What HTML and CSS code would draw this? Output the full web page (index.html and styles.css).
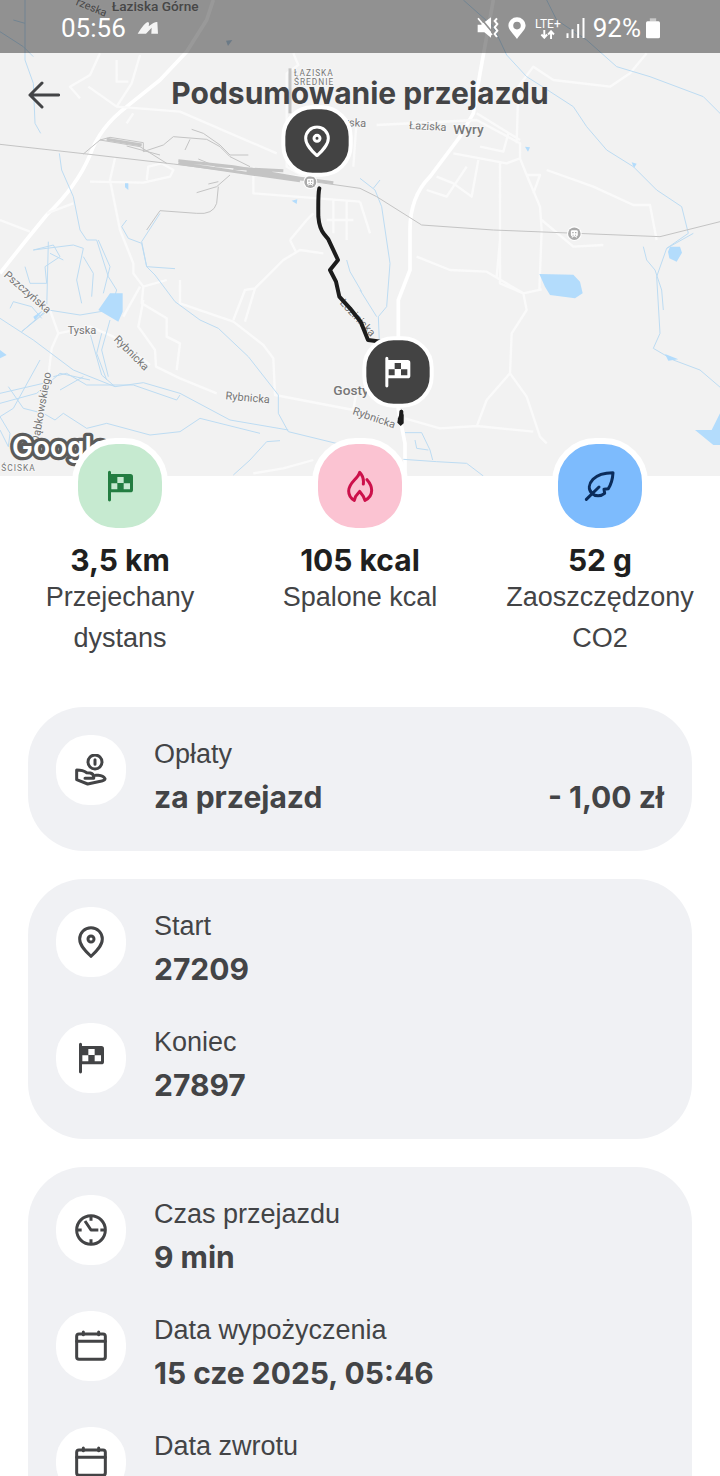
FILE: index.html
```
<!DOCTYPE html>
<html lang="pl">
<head>
<meta charset="utf-8">
<meta name="viewport" content="width=device-width, initial-scale=1">
<title>Podsumowanie przejazdu</title>
<link rel="stylesheet" href="styles.css">
</head>
<body>
<svg class="sprite" aria-hidden="true">
  <symbol id="pin" viewBox="0 0 96 96"><path class="line" d="M48 91C34 78 14 60 14 39A34 34 0 0 1 82 39C82 60 62 78 48 91Z"/><circle class="line" cx="48" cy="39" r="9"/></symbol>
  <symbol id="flag" viewBox="0 0 96 96"><path fill="currentColor" fill-rule="evenodd" d="M12 7a4 4 0 0 1 9 0v5h58q8 0 8 8v39q0 8-8 8H21v23a4 4 0 0 1-9 0ZM40 21v18h19V21ZM22 40v18h18V40ZM59 40v18h19V40Z"/></symbol>
  <symbol id="flame" viewBox="0 0 96 96"><path class="line" d="M58 42C60 26 55 15 47 7C42 27 14 37 14 63C14 77 22 86 31 91L35 79L47 64L58 79L63 91C74 86 83 75 83 61C83 48 77 38 69 29"/></symbol>
  <symbol id="leaf" viewBox="0 0 96 96"><path class="line" d="M7 88L45 51M24 70C12 58 14 42 27 28C40 14 62 8 87 8C86 26 82 42 73 56L60 58L62 70C50 80 34 80 24 70Z"/></symbol>
  <symbol id="hand" viewBox="0 0 96 96"><g class="line"><circle cx="60" cy="24" r="21"/><path d="M60 17v14M30 73H56Q58 60 46 57L35 56Q24 48 5 48V77L38 90L80 81Q90 78 90 74Q85 65 70 64H62"/></g></symbol>
  <symbol id="clock" viewBox="0 0 96 96"><g class="line flat"><circle cx="48" cy="48" r="43"/><path d="M48 4v16M48 76v16M4 48h16M76 48h16M30 21L48 48H70"/></g></symbol>
  <symbol id="calendar" viewBox="0 0 96 96"><g class="line"><rect x="5" y="12" width="86" height="76" rx="7"/><path d="M5 34H91M25 6v8M71 6v8"/></g></symbol>
  <symbol id="station" viewBox="0 0 44 44"><circle cx="22" cy="22" r="21" fill="#fff"/><circle cx="22" cy="22" r="18" fill="#aaa"/><rect x="12" y="12" width="20" height="18" rx="4" fill="#fff"/><path d="M15 33l4-4M29 33l-4-4" stroke="#fff" stroke-width="3"/><path d="M16 17h4v4h-4zM24 17h4v4h-4zM17 25h3v3h-3zM24 25h3v3h-3z" fill="#aaa"/></symbol>
</svg>

<div class="screen">
  <header class="hero">
    <svg class="map" viewBox="0 0 2160 1428" preserveAspectRatio="xMidYMin slice" role="img" aria-label="Mapa trasy przejazdu">
      <rect width="2160" height="1428" fill="#f2f2f2"/>
      <g class="road">
        <path class="wide" d="M0 820Q70 730 140 645Q230 560 270 465Q300 380 380 320L480 240L560 155L620 60L640 0"/>
        <path d="M300 160L270 225L210 260L240 295M265 260L350 320L540 335L830 460M350 180V245H385M420 165L395 250L350 320M880 160L895 195L860 220V500L940 545M400 340L380 370M270 545L430 548L510 530L520 510L485 490L445 500L440 540M345 475L330 540L360 690L400 790L400 820L430 860L500 840M220 610L140 640M0 660L90 695M640 505L900 530M760 500V580L1080 605M540 840V910L700 965L790 1035L820 1075L825 1185L1060 1230M430 860L425 910L500 955L500 1010L540 1030L530 1110M420 860L370 950M430 900L415 980L465 1050L468 1100L540 1135L650 1180M700 960L735 870L765 865L735 965M765 865L850 780L900 750L970 760M870 720L890 760M940 640L920 660L870 720M150 930L175 1000L155 1045L145 1130M175 1000L270 980L340 1010L450 1095M1000 600V700M1040 600V720M980 660H1060M760 1420L850 1405L940 1380"/>
        <path class="wide" d="M1480 0L1440 220L1420 340L1380 410L1290 530Q1230 590 1230 690V810L1195 900V1230L1215 1330V1428"/>
        <path d="M1130 375L1430 360L1560 430V475L1580 525L1620 620L1625 690L1618 870M1550 430L1555 260L1600 200L1660 240L1830 260L1890 220L1940 160M1430 340L1560 420M1360 460L1520 490L1560 475M1440 440L1510 455L1525 400M1310 530L1360 550L1415 590L1435 480M1280 570L1340 590L1400 500M1500 490V850L1570 880L1580 930L1535 1000L1530 1120L1580 1190L1620 1310L1640 1330M1530 1120L1460 1200L1430 1280M1250 770L1350 810L1460 815L1570 880L1625 868M1620 880M1500 720L1490 830M1215 1255L1320 1285L1430 1278L1600 1295M1580 525H1620L1600 580M1640 510L1780 560L1900 615H1950L1970 720M1625 660L1720 740L1810 735M1070 360L1060 500M1080 605L1110 700M1400 720M1070 1170L1060 1230"/>
      </g>
      <g class="water">
        <path d="M75 0V180L100 250L105 370L122 400M0 95L70 140L100 170M40 60L75 70M178 460L185 510L220 590L240 690L260 720H290L325 830L350 870L330 930L240 945L145 930L65 995L140 930M380 660L365 680L385 715L425 730L440 800L465 825L525 905L600 960L655 985L745 1070L835 1185V1240L865 1295L1070 1345M480 640L425 725L440 800L525 806M0 955L100 1020L220 1110L345 1160L430 1148L540 1180L690 1260L865 1290M160 1130L200 1120L260 1155H400L530 1200L540 1185M0 1210L110 1180L180 1120L270 1140M0 1180L130 1150M0 1250L40 1225L120 1080M25 1160L70 1225L130 1240L165 1260M165 1260L190 1240L260 1285L320 1270L450 1305L540 1295L600 1255L780 1300M700 1425L750 1380L800 1325L840 1322M180 1170L250 1130M0 1250L30 1300L25 1340L0 1290M270 1000L305 1125L345 1160M305 1000L290 1060L320 1140M330 960L305 1050L325 1130M140 850L135 800L180 770L160 735L100 750L220 735L250 745L230 840L245 910M250 770L280 820L275 890M295 720L330 800L310 880M75 800L90 850L140 850M30 925L40 905L95 920L125 955M150 760L190 780M145 725L140 930"/>
        <path d="M1390 0L1480 80L1520 165L1580 230L1635 265L1720 320L1760 380L1820 450L1900 500L1970 570L2045 620L2065 700L2000 745L1970 830L1980 1000L1960 1045L2020 1080L2100 1110L2170 1170M1930 740L1940 780L1965 810L1985 870L1990 930M2080 700L2000 745M1640 0L1670 60L1760 120L1850 200L1950 230L2110 290L2170 350M1080 535L1125 570L1145 620L1170 790L1160 920L1135 950L1138 1025M1120 565L1140 540M1080 870L1130 950M1040 780L1050 815L1085 875M1210 1378L1310 1385L1400 1390L1450 1428M1215 1298H1265L1290 1350L1298 1380M1245 1320L1250 1345L1285 1350"/>
      </g>
      <path fill="#b3dcfc" d="M330 880H368V935L355 965L295 930ZM1618 822L1720 824L1740 845L1748 880L1725 895L1650 885L1635 860ZM2010 740L2040 740L2046 758L2030 785L2008 775L2004 755ZM1995 1062L2035 1078L2005 1082ZM2085 1290L2135 1290L2160 1240V1335H2140ZM0 1050L20 1065L0 1075ZM100 950L130 930L105 960ZM375 550H385V570L375 562ZM875 602L892 598L890 612ZM1575 440L1590 442L1584 455ZM1895 487L1910 491L1902 504Z"/>
      <path fill="#b3cbe0" d="M678 122L697 120L684 138Z"/>
      <g class="rail">
        <path d="M0 433L260 462L520 492L940 545L1080 565L1130 590L1265 675L1480 690L1980 710L2160 665M250 462L300 420L420 440L500 490M300 420L330 412L430 428V455L490 435L520 410L620 418L660 440L690 470L750 500M380 438L480 465M555 450L570 418M575 388L610 400L660 435L690 465H745M595 477L650 500L760 505M590 578L650 560L690 525M625 552L655 545M655 560L650 610Q640 645 590 640L480 632L440 690"/>
        <path class="thick" d="M535 482L700 500L900 535L1000 548M535 490L740 520L900 542M700 505L850 512M740 512L900 538M320 418L425 435"/>
        <path class="thick" d="M870 205V340"/>
      </g>
      <g class="label">
        <text x="335" y="32" class="town">Łaziska Górne</text>
        <text transform="translate(226 14) rotate(22)">rzeska</text>
        <text x="882" y="227" class="district">ŁAZISKA</text>
        <text x="882" y="254" class="district">ŚREDNIE</text>
        <text transform="translate(1035 378) rotate(3)">rska</text>
        <text transform="translate(1227 387) rotate(3)">Łaziska</text>
        <text x="1360" y="402" class="town">Wyry</text>
        <text transform="translate(10 828) rotate(41)">Pszczyńska</text>
        <text x="203" y="1003">Tyska</text>
        <text transform="translate(340 1020) rotate(45)">Rybnicka</text>
        <text transform="translate(676 1198) rotate(5)">Rybnicka</text>
        <text transform="translate(1056 1242) rotate(19)">Rybnicka</text>
        <text transform="translate(1018 910) rotate(47)">Łoziniska</text>
        <text transform="translate(116 1330) rotate(-80)">Dąbkowskiego</text>
        <text x="1000" y="1184" class="town">Gostyń</text>
        <text x="4" y="1412" class="district">ŚCISKA</text>
      </g>
      <use href="#station" x="909" y="524" width="44" height="44"/>
      <use href="#station" x="1700" y="678" width="46" height="46"/>
      <path class="route" d="M958 565Q954 580 955 650Q958 685 972 702L985 718L1014 780L990 810L1008 845L1018 890L1050 925L1082 965L1104 1020L1150 1026M1204 1235L1203 1260"/>
      <path d="M1194 1255L1204 1228L1211 1245V1270L1202 1278L1192 1268Z" fill="#1c1c1c"/>
      <g class="marker">
        <rect x="850" y="322" width="202" height="202" rx="88"/>
        <use href="#pin" x="903" y="376" width="96" height="96"/>
        <rect x="1093" y="1015" width="202" height="202" rx="88"/>
        <use href="#flag" x="1144" y="1068" width="96" height="96"/>
      </g>
      <text class="logo" x="36" y="1370">Google</text>
    </svg>

    <div class="status">
      <span class="time">05:56</span>
      <svg class="brand" viewBox="0 0 66 40" fill="#f4f4f4"><path d="M2 37Q24 2 33 2Q38 3 35 15Q52 1 61 2L63 37H43L44 19L27 37Z"/></svg>
      <div class="status-right">
        <svg class="s-mute" viewBox="0 0 66 66"><path fill="#fff" d="M2 23H12L42 1V62L22 46H2Z"/><path d="M8 0L48 48" stroke="#919191" stroke-width="5"/><path d="M3 4L45 54" stroke="#fff" stroke-width="5"/><path d="M60 4l-7 8 8 9-8 10 8 10-8 10 7 9" fill="none" stroke="#fff" stroke-width="6"/></svg>
        <svg class="s-pin" viewBox="0 0 52 64"><path fill="#fff" fill-rule="evenodd" d="M26 64C15 48 1 38 1 24A25 23 0 0 1 51 24C51 38 36 48 26 64ZM26 14A11 11 0 1 0 26 36A11 11 0 1 0 26 14Z"/></svg>
        <span class="lte">LTE+<svg viewBox="0 0 44 28"><path d="M12 0V22M3 14l9 10 9-10M33 28V6M24 14l9-10 9 10" fill="none" stroke="#fff" stroke-width="6"/></svg></span>
        <svg class="s-bars" viewBox="0 0 56 60"><path d="M4 46V60M19 34V60M36 18V60M52 0V60" stroke="#fff" stroke-width="6"/></svg>
        <span>92%</span>
        <svg class="s-batt" viewBox="0 0 44 64"><path fill="#c9c9c9" d="M12 0H32V10H12Z"/><rect y="9" width="44" height="54" rx="5" fill="#fff"/></svg>
      </div>
    </div>
    <div class="topbar">
      <button class="back" type="button" aria-label="Wstecz"><svg viewBox="0 0 96 96"><path class="line" d="M92 48H6M42 12L6 48L42 84"/></svg></button>
      <h1>Podsumowanie przejazdu</h1>
    </div>
  </header>

  <main>
    <section class="stats">
      <div class="stat"><span class="bubble green"><svg><use href="#flag"/></svg></span><strong>3,5 km</strong><span class="name">Przejechany dystans</span></div>
      <div class="stat"><span class="bubble pink"><svg><use href="#flame"/></svg></span><strong>105 kcal</strong><span class="name">Spalone kcal</span></div>
      <div class="stat"><span class="bubble blue"><svg><use href="#leaf"/></svg></span><strong>52 g</strong><span class="name">Zaoszczędzony CO2</span></div>
    </section>

    <section class="card">
      <div class="item"><span class="icon"><svg><use href="#hand"/></svg></span><div class="info"><span class="name">Opłaty</span><div class="values"><strong>za przejazd</strong><strong>- 1,00 zł</strong></div></div></div>
    </section>
    <section class="card">
      <div class="item"><span class="icon"><svg><use href="#pin"/></svg></span><div class="info"><span class="name">Start</span><strong>27209</strong></div></div>
      <div class="item"><span class="icon"><svg><use href="#flag"/></svg></span><div class="info"><span class="name">Koniec</span><strong>27897</strong></div></div>
    </section>
    <section class="card">
      <div class="item"><span class="icon"><svg><use href="#clock"/></svg></span><div class="info"><span class="name">Czas przejazdu</span><strong>9 min</strong></div></div>
      <div class="item"><span class="icon"><svg><use href="#calendar"/></svg></span><div class="info"><span class="name">Data wypożyczenia</span><strong>15 cze 2025, 05:46</strong></div></div>
      <div class="item"><span class="icon"><svg><use href="#calendar"/></svg></span><div class="info"><span class="name">Data zwrotu</span></div></div>
    </section>
  </main>
</div>
</body>
</html>
```
FILE: styles.css
```
* { box-sizing: border-box; }
body { margin: 0; background: #fff; color: #434446; font-family: "Liberation Sans", Arial, sans-serif; }
svg { display: block; }
.sprite { position: absolute; width: 0; height: 0; }
.screen { height: 100vh; overflow: hidden; }
.line { fill: none; stroke: currentColor; stroke-width: 9; stroke-linecap: round; stroke-linejoin: round; }
.flat { stroke-linecap: butt; }

/* Map header */
.hero { position: relative; aspect-ratio: 180 / 119; overflow: hidden; }
.map { position: absolute; inset: 0; width: 100%; height: 100%; }
.road { fill: none; stroke: #fafafa; stroke-width: 7; stroke-linejoin: round; }
.road .wide { stroke: #fff; stroke-width: 11; }
.water { fill: none; stroke: #bddcf3; stroke-width: 3; stroke-linejoin: round; }
.rail { fill: none; stroke: #c4c4c4; stroke-width: 3; }
.rail .thick { stroke-width: 9; }
.route { fill: none; stroke: #1c1c1c; stroke-width: 12; stroke-linejoin: round; stroke-linecap: round; }
.marker { color: #fff; }
.marker rect { fill: #434343; stroke: #fff; stroke-width: 12; }
.label { font-family: Roboto, sans-serif; font-size: 33px; fill: #777; stroke: #f6f6f6; stroke-width: 6; paint-order: stroke; }
.label .town { font-size: 41px; font-weight: 500; }
.label .district { font-size: 25px; letter-spacing: 3px; }
.logo { font: 600 84px Inter, sans-serif; fill: #fff; stroke: #5b5b5b; stroke-width: 20; stroke-linejoin: round; paint-order: stroke; }

.status { position: relative; display: flex; align-items: center; height: 53px; padding: 3px 60px 0 61px; background: rgba(0, 0, 0, .4); color: #fff; font: 26px/30px Roboto, sans-serif; }
.brand { width: 22px; height: 14px; margin-left: 11px; }
.status-right { display: flex; align-items: center; margin-left: auto; }
.s-mute { width: 22px; height: 22px; }
.s-pin { width: 18px; height: 22px; margin-left: 9px; }
.lte { display: grid; justify-items: center; margin-left: 9px; font-size: 12px; line-height: 12px; }
.lte svg { width: 15px; height: 9px; }
.s-bars { width: 19px; height: 20px; margin: 0 8px 0 5px; }
.s-batt { width: 14px; height: 21px; margin-left: 5px; }

.topbar { position: relative; display: grid; grid-template-columns: 32px 1fr 32px; align-items: center; padding: 20px 28px; color: #434446; }
.back { width: 32px; height: 44px; padding: 0; border: 0; background: none; color: inherit; }
.back svg { width: 32px; height: 32px; }
h1 { align-self: start; margin: 0; text-align: center; font: 700 30px/40px Inter, sans-serif; }

/* Ride statistics */
.stats { position: relative; display: grid; grid-template-columns: repeat(3, 1fr); margin-top: -38px; }
.stat { display: flex; flex-direction: column; align-items: center; padding: 0 24px; text-align: center; }
.stat strong { margin-top: 9px; color: #1f1f20; line-height: 34px; }
.stat .name { line-height: 41px; }
.bubble { display: grid; place-items: center; width: 96px; height: 96px; border: 6px solid #fff; border-radius: 44px; }
.bubble svg, .icon svg { width: 32px; height: 32px; }
.green { background: #c6ead0; color: #237d41; }
.pink { background: #fbc3d2; color: #cc114b; }
.blue { background: #7dbbfd; color: #0b2c5b; }

.name { font-size: 27px; line-height: 38px; }
strong { font: 700 30px/44px Inter, sans-serif; }

/* Detail cards */
.card { display: grid; gap: 28px; margin: 28px; padding: 28px; border-radius: 56px; background: #f0f1f4; }
.stats + .card { margin-top: 48px; }
.item { display: flex; gap: 28px; min-height: 88px; }
.icon { display: grid; place-items: center; flex: none; width: 70px; height: 70px; border-radius: 33px; background: #fff; }
.info { display: flex; flex: 1; flex-direction: column; gap: 2px; }
.values { display: flex; justify-content: space-between; }
```
